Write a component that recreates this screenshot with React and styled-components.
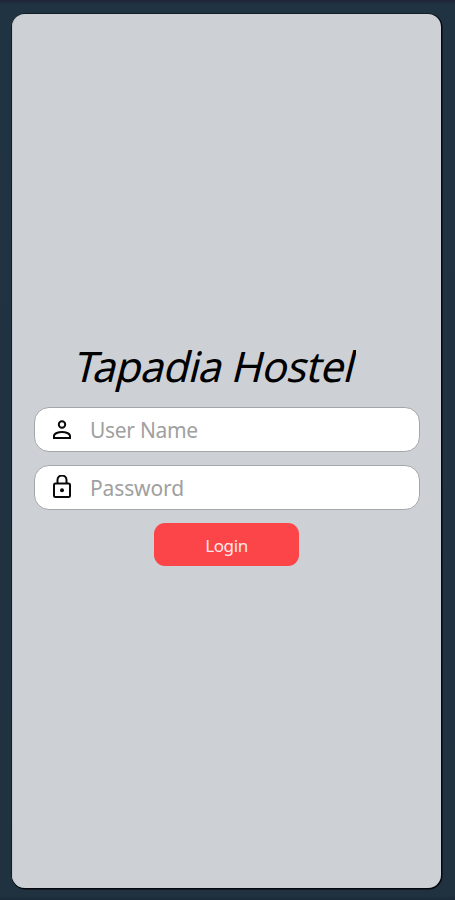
import React from "react";
import styled, { createGlobalStyle } from "styled-components";

const GlobalStyle = createGlobalStyle`
  * { box-sizing: border-box; }
  body { margin: 0; background: #203240; font-family: "Noto Sans", sans-serif; }
`;

const Page = styled.main`
  height: 900px;
  padding: 14px 14px 12px 12px;
  background: linear-gradient(#202438 0, #203342 5px, #203240 895px, #1c2a39 900px);
`;

const Screen = styled.section`
  height: 874px;
  padding: 325px 21px 0 22px;
  border-radius: 13px;
  background: #cdd1d5;
  box-shadow: inset 1px 0 0 #bfc5ca, 0.5px 0.5px 0 1px #05090f;
`;

const Title = styled.h1`
  width: 302px;
  height: 54px;
  margin: 0 0 14px 20px;
  overflow: hidden;
  font-size: 42px;
  font-weight: 400;
  line-height: 54px;
  color: #000;
  white-space: nowrap;
`;

const Slanted = styled.span`
  display: inline-block;
  margin-left: 22px;
  letter-spacing: -0.75px;
  transform: skewX(-14deg);
`;

const Form = styled.form`
  display: flex;
  flex-direction: column;
  align-items: center;
  gap: 13px;
`;

const Field = styled.label`
  display: flex;
  align-items: center;
  width: 100%;
  height: 45px;
  padding-left: 15px;
  border: 1px solid #a4a7a9;
  border-radius: 15px;
  background: #fff;
`;

const Icon = styled.svg`
  flex: none;
  width: 24px;
  height: 26px;
  margin-right: 16px;
  fill: none;
  stroke: #090909;
  stroke-width: 2;
`;

const Input = styled.input`
  flex: 1;
  min-width: 0;
  height: 40px;
  padding: 0;
  border: 0;
  outline: 0;
  background: transparent;
  font: 21px "Noto Sans", sans-serif;
  letter-spacing: ${({ $tracking }) => $tracking};
  &::placeholder { color: #a0a0a0; opacity: 1; }
`;

const LoginButton = styled.button`
  width: 145px;
  height: 43px;
  margin-right: 1px;
  padding: 2px 0 0;
  border: 0;
  border-radius: 11px;
  background: #fc4549;
  color: #ffe8e7;
  font: 17px "Noto Sans", sans-serif;
  letter-spacing: -0.4px;
`;

export default function App() {
  return (
    <>
      <GlobalStyle />
      <Page>
        <Screen>
          <Title><Slanted>Tapadia Hostel</Slanted></Title>
          <Form onSubmit={(e) => e.preventDefault()}>
            <Field>
              <Icon viewBox="0 0 24 26">
                <circle cx="12" cy="7.5" r="3.2" />
                <path d="M4 21v-2c0-2.6 4.5-4 8-4s8 1.4 8 4v2Z" />
              </Icon>
              <Input $tracking="-0.3px" placeholder="User Name" aria-label="User Name" />
            </Field>
            <Field>
              <Icon viewBox="0 0 24 26">
                <rect x="4" y="8.5" width="16" height="13.5" rx="1.5" />
                <path d="M7.5 8.5V5a4.5 4.5 0 0 1 9 0v3.5" />
                <circle cx="12" cy="15.3" r="2" fill="#090909" stroke="none" />
              </Icon>
              <Input $tracking="-0.12px" type="password" placeholder="Password" aria-label="Password" />
            </Field>
            <LoginButton type="submit">Login</LoginButton>
          </Form>
        </Screen>
      </Page>
    </>
  );
}
